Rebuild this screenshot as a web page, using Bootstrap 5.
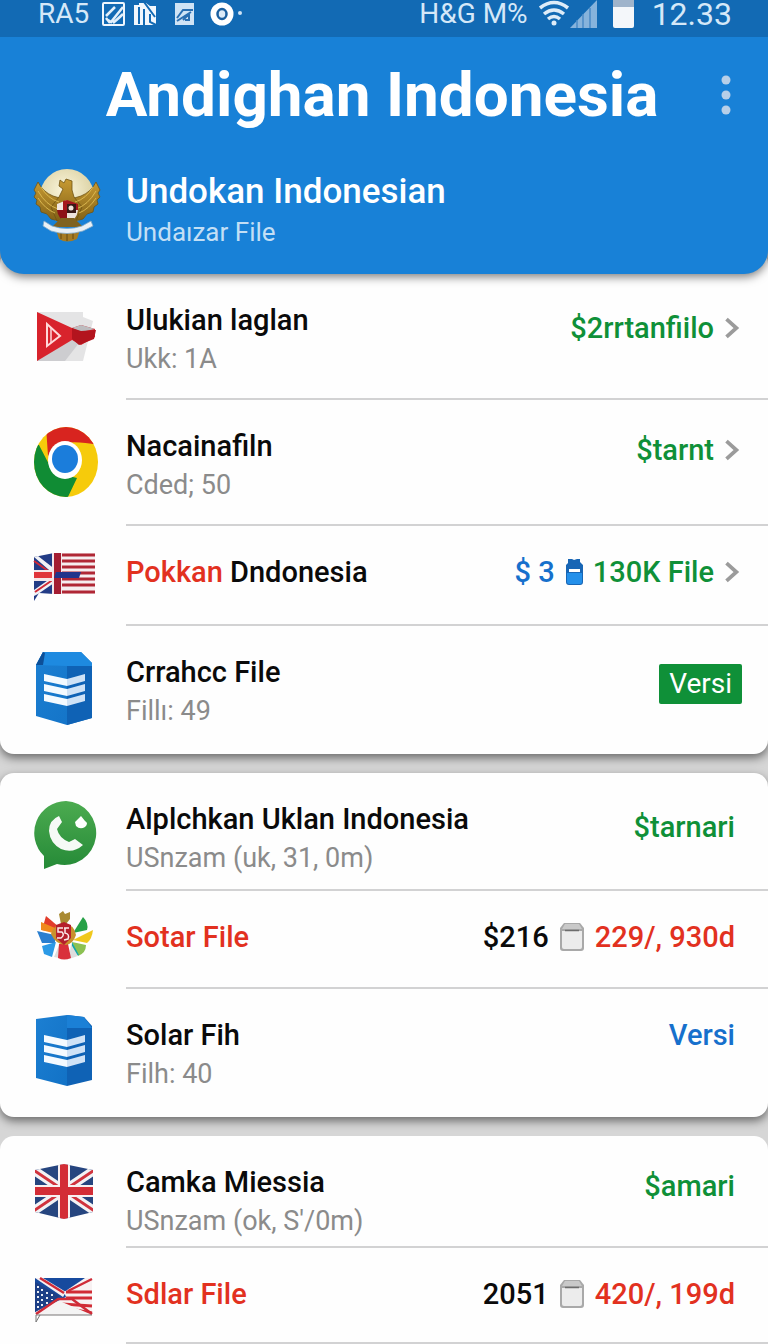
<!DOCTYPE html>
<html lang="id">
<head>
<meta charset="utf-8">
<meta name="viewport" content="width=device-width, initial-scale=1">
<title>Andighan Indonesia</title>
<link href="https://cdn.jsdelivr.net/npm/bootstrap@5.3.0/dist/css/bootstrap.min.css" rel="stylesheet">
<style>
  :root { --brand: #1881d7; --go: #0f9038; --alert: #e2311f; --rule: #d2d2d3; }
  body { font-family: Roboto, "Liberation Sans", sans-serif; background: #d6d6d6; color: #0a0a0a; }
  .status-strip { background: #126ab4; color: #d5e8f8; padding: 0 36px 9px 38px; font-size: 28px; line-height: 28px; }
  .status-icons { margin-left: 12px; }
  .clock { font-size: 32px; line-height: 28px; }
  .app-head { background: var(--brand); color: #fff; border-radius: 0 0 24px 24px; box-shadow: 0 3px 10px rgba(0,0,0,.5); position: relative; z-index: 1; }
  .app-title { font-size: 62px; line-height: 64px; font-weight: 700; padding-left: 32px; }
  .title-bar { padding: 26px 24px 0; }
  .more-btn { width: 36px; line-height: 0; }
  .profile { padding: 40px 0 23px; }
  .icon-cell { width: 126px; padding-left: 32px; flex: none; }
  .profile-name { font-size: 35px; line-height: 42px; font-weight: 500; }
  .profile-sub { font-size: 26px; line-height: 38px; color: #c3dff5; }
  .panel { background: #fefefe; border-radius: 14px; box-shadow: 0 4px 10px rgba(0,0,0,.5); margin-bottom: 19px; position: relative; }
  .panel-first { margin-top: -24px; padding-top: 24px; }
  .panel-end { margin-bottom: 0; box-shadow: none; border-radius: 14px 14px 0 0; }
  .entry-icon { padding-top: 26px; }
  .entry-body { border-bottom: 2px solid var(--rule); padding: 26px 0 20px; }
  .entry:last-child .entry-body { border-bottom-color: transparent; padding-bottom: 22px; }
  .entry-single .entry-body { padding-bottom: 30px; }
  .panel-first .entry-single .entry-body { padding-bottom: 32px; }
  .entry-tight .entry-body { padding-bottom: 12px; }
  .panel-end .entry-body { border-bottom-color: var(--rule); }
  .panel-end .entry-tight .entry-body { padding-bottom: 6px; }
  .panel-end .entry:last-child .entry-body { border-bottom-color: var(--rule); padding-bottom: 28px; }
  .entry-name, .meta { font-size: 29px; line-height: 40px; font-weight: 500; }
  .entry-sub { font-size: 27px; line-height: 38px; color: #8b8b8b; }
  .meta { gap: 10px; white-space: nowrap; padding-right: 33px; }
  .meta-arrow { padding-right: 28px; }
  .go { color: var(--go); } .alert-ink { color: var(--alert); } .brand-ink { color: #1670cc; }
  .version-btn { background: var(--go); color: #fff; font-size: 28px; line-height: 40px; font-weight: 400; padding: 0 10px; border: 0; border-radius: 2px; margin-right: 26px; }
  svg { flex: none; display: block; }
</style>
</head>
<body>
<svg width="0" height="0" class="position-absolute" aria-hidden="true">
  <defs>
    <linearGradient id="wa" x1="0" y1="0" x2="0" y2="1"><stop offset="0" stop-color="#4cab50"/><stop offset="1" stop-color="#258a37"/></linearGradient>
    <linearGradient id="docL" x1="0" y1="0" x2="1" y2="1"><stop offset="0" stop-color="#1c7fd2"/><stop offset="1" stop-color="#1272c6"/></linearGradient>
    <radialGradient id="sun" cx=".45" cy=".4" r=".6"><stop offset="0" stop-color="#fbf6dc"/><stop offset="1" stop-color="#d9cfa0"/></radialGradient>
    <linearGradient id="gold" x1="0" y1="0" x2="0" y2="1"><stop offset="0" stop-color="#c79a32"/><stop offset="1" stop-color="#806016"/></linearGradient>
    <symbol id="chev" viewBox="0 0 14 20"><path d="M2 2l9 8-9 8" fill="none" stroke="#9b9b9b" stroke-width="3.4"/></symbol>
    <symbol id="bin" viewBox="0 0 26 30"><path d="M5 1h16l4 5v20q0 3-3 3H4q-3 0-3-3V6z" fill="#a9a9a9"/><path d="M6 2h14l3 5H3z" fill="#c9c9c9"/><path d="M3 9h20v16q0 2-2 2H5q-2 0-2-2z" fill="#ececec"/><path d="M6 8.500h14" stroke="#6d6d6d" stroke-width="1.500"/></symbol>
    <symbol id="doclines" viewBox="0 0 64 76"><path d="M10 24l23 5v7l-23-5zM10 34l23 5v7l-23-5zM10 44l23 5v7l-23-5z" fill="#f4faff"/><path d="M33 29l18-5v7l-18 5zM33 39l18-5v7l-18 5zM33 49l18-5v7l-18 5z" fill="#cfe2f6"/></symbol>
  </defs>
</svg>

<header class="app-head">
  <div class="status-strip d-flex justify-content-between align-items-start">
    <div class="d-flex align-items-center">
      <span>RA5</span>
      <svg class="status-icons" width="142" height="26" viewBox="0 0 142 26" aria-hidden="true">
        <rect x="2" y="2" width="21" height="22" rx="1" fill="none" stroke="#eef6fd" stroke-width="2"/><path d="M5 15L14 6M7 19l3 2L22 6M12 22q6-5 10-9M5 17l4 5" stroke="#e2effa" stroke-width="2.500" fill="none"/>
        <path d="M33 4h5V2h7l4 3h6v19H33z" fill="#f1f7fd"/><path d="M38 6v17M43 8v16M43 1l11 15M49 13v8l6 3" stroke="#126ab4" stroke-width="2" fill="none"/>
        <rect x="74" y="2" width="19" height="22" fill="#cfe3f5"/><path d="M76 17l6-8h10M76 20L90 11M82 19l6-6v6h-4" stroke="#2a6fb2" stroke-width="2" fill="none"/>
        <circle cx="121" cy="13" r="11.500" fill="#fff"/><ellipse cx="121" cy="13" rx="4.500" ry="5" fill="#dcebf8" stroke="#1a5f9f" stroke-width="2.500"/><circle cx="139" cy="12" r="2" fill="#cfe3f5"/>
      </svg>
    </div>
    <div class="d-flex align-items-start">
      <span>H&amp;G M%</span>
      <svg class="ms-2 me-3" width="100" height="28" viewBox="0 0 100 28" aria-hidden="true">
        <g fill="none" stroke="#deecf8" stroke-width="3.500"><path d="M4 8q14-11 28 0M8 14q10-8 20 0M12 19q6-5 12 0"/></g><circle cx="18" cy="23" r="2.500" fill="#deecf8"/>
        <path d="M34 28L61 0v28z" fill="#86b3dc"/><path d="M41 20v8M47 14v14M54 8v20" stroke="#4a8bc6" stroke-width="1.500"/>
        <path d="M77 0h21v9H77z" fill="#9fb4cb"/><path d="M77 7h21v19q0 2-2 2H79q-2 0-2-2z" fill="#f4f7fa"/>
      </svg>
      <span class="clock">12.33</span>
    </div>
  </div>
  <div class="title-bar d-flex align-items-center">
    <h1 class="app-title flex-grow-1 text-center mb-0">Andighan Indonesia</h1>
    <button type="button" class="more-btn btn p-0 border-0" aria-label="Menu lainnya">
      <svg class="mx-auto" width="10" height="40" viewBox="0 0 10 40" fill="#b7cfe8"><circle cx="5" cy="5" r="4.500"/><circle cx="5" cy="20" r="4.500"/><circle cx="5" cy="35" r="4.500"/></svg>
    </button>
  </div>
  <div class="profile d-flex">
    <div class="icon-cell">
      <svg width="70" height="76" viewBox="0 0 70 76" aria-hidden="true">
        <circle cx="35" cy="29" r="27" fill="url(#sun)"/>
        <g fill="url(#gold)" stroke="#6f5313" stroke-width=".8"><path d="M6 15l-4 8 2 3-2 4 3 3-1 4 4 3 1 5 6 2 4 5 12 3V32l-10-3q-10-4-15-14z"/><path d="M64 15l4 8-2 3 2 4-3 3 1 4-4 3-1 5-6 2-4 5-12 3V32l10-3q10-4 15-14z"/>
        <path d="M27 19l1-6 4 3 2-4 6 2v9l2 7 8 10-6 14H25l-6-14 8-10 4-8z"/></g>
        <g fill="none" stroke="#e0bd55" stroke-width=".9"><path d="M6 24q8 14 20 18M6 31q7 11 17 15M64 24q-8 14-20 18M64 31q-7 11-17 15M9 20q7 12 18 15M61 20q-7 12-18 15"/></g>
        <path d="M25 37l10-4v10H25z" fill="#f1e6df"/><path d="M31 34l4-1 11 4v7H31z" fill="#a5151c"/><path d="M25 43h10v13q-9-4-10-13z" fill="#8d1118"/><path d="M35 43h11q-1 10-11 13z" fill="#eee3dc"/><path d="M35 37h9v9h-9z" fill="#391917"/><circle cx="39" cy="41" r="2.500" fill="#efe3d9"/>
        <path d="M24 63h24l-3 9q-10 5-18 0z" fill="#a57b22"/><path d="M29 63v9M35 63v11M41 63v9" stroke="#654a10" stroke-width="1"/>
        <path d="M20 60l9-9h13l9 9z" fill="#7f6220"/>
        <path d="M12 54l8 5q15 5 30 0l9-5 2 5-10 5q-16 5-32 0l-8-5z" fill="#e9f0f5" stroke="#7fa8c8" stroke-width=".8"/>
      </svg>
    </div>
    <div class="pt-1">
      <div class="profile-name">Undokan Indonesian</div>
      <div class="profile-sub">Undaızar File</div>
    </div>
  </div>
</header>

<main>
  <ul class="panel panel-first list-unstyled">
    <li class="entry d-flex">
      <div class="icon-cell entry-icon">
        <svg width="66" height="72" viewBox="0 0 66 72" aria-hidden="true">
          <path d="M5 12h46v5l10 4-10 40H5z" fill="#e4e4e5"/><path d="M5 60l34-20 8 3-14 18H5z" fill="#cdcdd0"/>
          <path d="M5 12l35 16 9-3 14 4v8l-14 8-9-5L5 61z" fill="#d8232c"/><path d="M40 28l9-3 14 4-14 3z" fill="#bcbcbf"/><path d="M49 31l15-1-2 9-15 6-7-6V28z" fill="#b3141e"/>
          <path d="M15 24v22l13-10z" fill="none" stroke="#ffd9d9" stroke-width="2"/><path d="M19 28v15" stroke="#ffd9d9" stroke-width="1.500"/>
        </svg>
      </div>
      <div class="entry-body flex-grow-1 d-flex justify-content-between align-items-start">
        <div><div class="entry-name">Ulukian laglan</div><div class="entry-sub">Ukk: 1A</div></div>
        <div class="meta meta-arrow pt-2 d-flex align-items-center"><span class="go">$2rrtanfiilo</span><svg width="16" height="22" aria-hidden="true"><use href="#chev"/></svg></div>
      </div>
    </li>
    <li class="entry d-flex">
      <div class="icon-cell entry-icon">
        <svg width="66" height="72" viewBox="0 0 66 72" aria-hidden="true">
          <clipPath id="chr"><ellipse cx="34" cy="36" rx="32" ry="35"/></clipPath>
          <g clip-path="url(#chr)"><path d="M0 0h66v72H0z" fill="#f6cb0b"/><path d="M14 0h52v19q-20-4-33-2L16 30z" fill="#d8241f"/><path d="M0 18l7 1 14 27 24 6-10 21H0z" fill="#108c34"/></g>
          <ellipse cx="33" cy="34" rx="17" ry="19" fill="#fff"/><ellipse cx="33" cy="33" rx="13" ry="14" fill="#1b7ddb"/>
        </svg>
      </div>
      <div class="entry-body flex-grow-1 d-flex justify-content-between align-items-start">
        <div><div class="entry-name">Nacainafiln</div><div class="entry-sub">Cded; 50</div></div>
        <div class="meta meta-arrow pt-1 d-flex align-items-center"><span class="go">$tarnt</span><svg width="16" height="22" aria-hidden="true"><use href="#chev"/></svg></div>
      </div>
    </li>
    <li class="entry entry-single d-flex">
      <div class="icon-cell entry-icon">
        <svg width="66" height="50" viewBox="0 0 66 50" aria-hidden="true">
          <path d="M2 5l20-4v41l-15-1-5 8z" fill="#233c86"/><path d="M2 5l4-1 18 14v6zM2 38l20-14v7L6 42l-4 2z" fill="#f2f2f5"/><path d="M2 9l20 14M3 40l19-13" stroke="#d12a36" stroke-width="2"/>
          <path d="M29 1h34v41H29z" fill="#f6eef0"/><path d="M29 3h34M29 9h34M29 15h34M29 21h34M29 27h34M29 33h34M29 40h34" stroke="#b02735" stroke-width="3"/>
          <path d="M2 18h28v11H2z" fill="#f5e7e9"/><path d="M2 20h28v6H2z" fill="#e0353b"/><path d="M20 1h10v41H20z" fill="#f4e7ea"/><path d="M22 1h7v41h-7z" fill="#a41d32"/><path d="M24 20h25l-2 6H22z" fill="#21348b"/>
        </svg>
      </div>
      <div class="entry-body flex-grow-1 d-flex justify-content-between align-items-start">
        <div class="entry-name"><span class="alert-ink">Pokkan</span> Dndonesia</div>
        <div class="meta meta-arrow d-flex align-items-center"><span class="brand-ink">$ 3</span>
          <svg width="18" height="28" viewBox="0 0 18 28" aria-hidden="true"><path d="M3 1h4l2 1 3-1h3v3l3 3v17q0 3-3 3H4q-3 0-3-3V7l2-2z" fill="#1866b5"/><path d="M2 15h15v9q0 2-2 2H4q-2 0-2-2z" fill="#2490ea"/><path d="M4 11h11v3H4z" fill="#fff"/></svg>
          <span class="go">130K File</span><svg width="16" height="22" aria-hidden="true"><use href="#chev"/></svg></div>
      </div>
    </li>
    <li class="entry d-flex">
      <div class="icon-cell entry-icon">
        <svg width="64" height="76" viewBox="0 2 64 76" aria-hidden="true">
          <path d="M11 2h38l11 11v55l-25 7-31-9V15z" fill="url(#docL)"/><path d="M11 2h38l11 11v3H35L4 15z" fill="#1e8ae0"/><path d="M4 15l7-13 2 1-2 12z" fill="#0d4f98"/><path d="M35 16h25v52l-25 7z" fill="#0f62b5"/>
          <svg x="2" width="64" height="76"><use href="#doclines"/></svg>
        </svg>
      </div>
      <div class="entry-body flex-grow-1 d-flex justify-content-between align-items-start">
        <div><div class="entry-name">Crrahcc File</div><div class="entry-sub">Fillı: 49</div></div>
        <div class="pt-2 mt-1"><button type="button" class="version-btn">Versi</button></div>
      </div>
    </li>
  </ul>

  <ul class="panel list-unstyled">
    <li class="entry entry-tight d-flex">
      <div class="icon-cell entry-icon">
        <svg width="66" height="72" viewBox="0 0 66 72" aria-hidden="true">
          <path d="M34 2a31.500 32 0 1 1-9 63L12 70V57A32 32 0 0 1 34 2z" fill="url(#wa)"/>
          <path d="M27 17q-10 4-10 15 1 12 12 18 12 5 22-4l-8-6-6 3q-10-4-12-13l5-7z" fill="#f6faf6"/><path d="M43 23l6-6 4 5q4 2 0 6-5 3-9-1z" fill="#fff"/>
        </svg>
      </div>
      <div class="entry-body flex-grow-1 d-flex justify-content-between align-items-start">
        <div><div class="entry-name">Alplchkan Uklan Indonesia</div><div class="entry-sub">USnzam (uk, 31, 0m)</div></div>
        <div class="meta pt-2"><span class="go">$tarnari</span></div>
      </div>
    </li>
    <li class="entry entry-single d-flex">
      <div class="icon-cell pt-3">
        <svg class="mt-1" width="66" height="52" viewBox="0 0 66 52" aria-hidden="true">
          <path d="M14 5l13 11-5 5-12-2z" fill="#e23c2b"/><path d="M9 11l14 6-2 5-12-3z" fill="#f08a1d"/><path d="M5 20l18 4v8L10 32z" fill="#2a7fd0"/><path d="M10 35l14-4-4 15-8-3z" fill="#2c9ae6"/>
          <path d="M51 6q6 6 4 13l-14 3z" fill="#27a147"/><path d="M61 19q-1 9-6 13l-14-3z" fill="#f0c81c"/><path d="M54 34q0 8-8 11l-6-14z" fill="#8cc152"/><path d="M40 31l7 13-8 2z" fill="#12a5a8"/>
          <path d="M22 46l6-14 5 16zM37 48l2-15 7 12z" fill="#ddd"/><path d="M27 33h9l3 14q-7 3-13 0z" fill="#d9303b"/>
          <path d="M27 3l4-3 2 3 5-2v7l-4 5h-5z" fill="#a98a32"/><path d="M19 23q3-10 13-10t12 11q-3 9-10 10-10 0-15-11z" fill="#c9912c"/><path d="M24 14l8-3 7 3v13l-7 7-8-7z" fill="#b5202c"/><path d="M31 17h-5v4h4q3 3-1 6h-4M32 17h5M33 17v5q5 1 3 6l-4 1" fill="none" stroke="#fbeaea" stroke-width="1.500"/>
        </svg>
      </div>
      <div class="entry-body flex-grow-1 d-flex justify-content-between align-items-start">
        <div class="entry-name alert-ink">Sotar File</div>
        <div class="meta d-flex align-items-center"><span>$216</span><svg width="26" height="30" aria-hidden="true"><use href="#bin"/></svg><span class="alert-ink">229/, 930d</span></div>
      </div>
    </li>
    <li class="entry d-flex">
      <div class="icon-cell entry-icon">
        <svg width="64" height="76" viewBox="0 4 64 76" aria-hidden="true">
          <path d="M4 8l31-4v71L4 67z" fill="url(#docL)"/><path d="M35 4l17 2 8 9v54l-25 6z" fill="#0f62b5"/><path d="M35 4l17 2 8 11H35z" fill="#1b80d6"/>
          <svg x="2" width="64" height="76"><use href="#doclines"/></svg>
        </svg>
      </div>
      <div class="entry-body flex-grow-1 d-flex justify-content-between align-items-start">
        <div><div class="entry-name">Solar Fih</div><div class="entry-sub">Filh: 40</div></div>
        <div class="meta"><a href="#" class="brand-ink text-decoration-none">Versi</a></div>
      </div>
    </li>
  </ul>

  <ul class="panel panel-end list-unstyled">
    <li class="entry entry-tight d-flex">
      <div class="icon-cell entry-icon">
        <svg width="64" height="60" viewBox="0 0 64 60" aria-hidden="true">
          <clipPath id="uk"><path d="M3 8l29-6 29 6v42l-29 7-29-7z"/></clipPath>
          <g clip-path="url(#uk)"><path d="M0 0h64v60H0z" fill="#26457f"/><path d="M0 7l64 43M64 7L0 50" stroke="#f2f2f4" stroke-width="9"/><path d="M0 7l64 43M64 7L0 50" stroke="#d0333d" stroke-width="3"/><path d="M32 0v60M0 29h64" stroke="#f8f0f0" stroke-width="12"/><path d="M32 0v60M0 29h64" stroke="#d32d36" stroke-width="8"/></g>
        </svg>
      </div>
      <div class="entry-body flex-grow-1 d-flex justify-content-between align-items-start">
        <div><div class="entry-name">Camka Miessia</div><div class="entry-sub">USnzam (ok, S'/0m)</div></div>
        <div class="meta pt-1"><span class="go">$amari</span></div>
      </div>
    </li>
    <li class="entry entry-single d-flex">
      <div class="icon-cell entry-icon">
        <svg width="62" height="50" viewBox="0 0 62 50" aria-hidden="true">
          <path d="M3 4h57v37H3z" fill="#f7f1f2"/><path d="M34 18h26M34 24h26M30 30l30 2M38 35l22 4" stroke="#d12c35" stroke-width="3"/><path d="M3 4h50L32 18l2 5-31 15z" fill="#174a9e"/><path d="M3 4h8l23 14-3 5z" fill="#f5f0f2"/><path d="M8 4l24 15M60 5L36 17M4 40l22-15h14l20 15" fill="none" stroke="#cf2b38" stroke-width="2.500"/>
          <path d="M3 8l25 14L3 38z" fill="#1d3f86"/><path d="M6 12v24M10 15v18M15 18v13M20 20v6" stroke="#fff" stroke-width="1.800" stroke-dasharray="2 3"/><path d="M10 40l20-12 28 12z" fill="#f4f4f4"/><path d="M4 41h56M4 41v7l4-7" fill="none" stroke="#777" stroke-width="1"/>
        </svg>
      </div>
      <div class="entry-body flex-grow-1 d-flex justify-content-between align-items-start">
        <div class="entry-name alert-ink">Sdlar File</div>
        <div class="meta d-flex align-items-center"><span>2051</span><svg width="26" height="30" aria-hidden="true"><use href="#bin"/></svg><span class="alert-ink">420/, 199d</span></div>
      </div>
    </li>
  </ul>
</main>
<script src="https://cdn.jsdelivr.net/npm/bootstrap@5.3.0/dist/js/bootstrap.bundle.min.js"></script>
</body>
</html>
